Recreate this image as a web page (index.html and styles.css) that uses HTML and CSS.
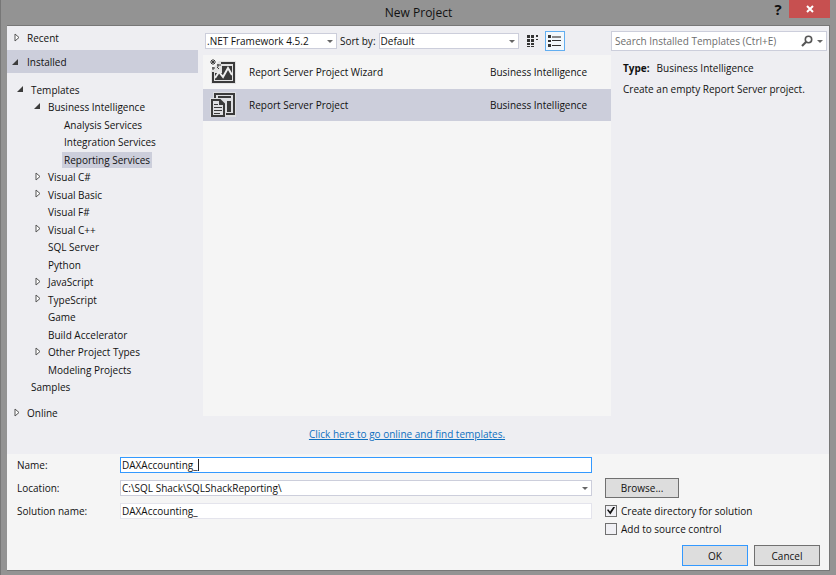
FILE: index.html
```html
<!DOCTYPE html>
<html lang="en">
<head>
<meta charset="utf-8">
<title>New Project</title>
<link rel="stylesheet" href="styles.css">
</head>
<body>
<svg class="defs" aria-hidden="true">
  <symbol id="closed" viewBox="0 0 6 9"><path d="M1 1v7l4-3.5z" fill="#fff" stroke="#555"/></symbol>
  <symbol id="open" viewBox="0 0 6 6"><path d="M6 0v6H0z" fill="#3c3c3c"/></symbol>
</svg>
<header class="titlebar">
  <h1>New Project</h1>
  <div class="window-buttons">
    <button class="help" type="button" aria-label="Help">?</button>
    <button class="close" type="button" aria-label="Close"><svg width="8" height="8" viewBox="0 0 8 8"><path d="M1 1l6 6M7 1L1 7" stroke="#fff" stroke-width="2"/></svg></button>
  </div>
</header>
<form class="dialog">
  <div class="upper">
    <nav class="sidebar">
      <div class="group"><svg class="closed"><use href="#closed"/></svg>Recent</div>
      <div class="group current"><svg class="open"><use href="#open"/></svg>Installed</div>
      <ul class="tree">
        <li class="l1"><svg class="open"><use href="#open"/></svg><span>Templates</span></li>
        <li class="l2"><svg class="open"><use href="#open"/></svg><span>Business Intelligence</span></li>
        <li class="l3"><span>Analysis Services</span></li>
        <li class="l3"><span>Integration Services</span></li>
        <li class="l3"><span class="picked">Reporting Services</span></li>
        <li class="l2"><svg class="closed"><use href="#closed"/></svg><span>Visual C#</span></li>
        <li class="l2"><svg class="closed"><use href="#closed"/></svg><span>Visual Basic</span></li>
        <li class="l2"><span>Visual F#</span></li>
        <li class="l2"><svg class="closed"><use href="#closed"/></svg><span>Visual C++</span></li>
        <li class="l2"><span>SQL Server</span></li>
        <li class="l2"><span>Python</span></li>
        <li class="l2"><svg class="closed"><use href="#closed"/></svg><span>JavaScript</span></li>
        <li class="l2"><svg class="closed"><use href="#closed"/></svg><span>TypeScript</span></li>
        <li class="l2"><span>Game</span></li>
        <li class="l2"><span>Build Accelerator</span></li>
        <li class="l2"><svg class="closed"><use href="#closed"/></svg><span>Other Project Types</span></li>
        <li class="l2"><span>Modeling Projects</span></li>
        <li class="l1"><span>Samples</span></li>
      </ul>
      <div class="group"><svg class="closed"><use href="#closed"/></svg>Online</div>
    </nav>
    <main class="center">
      <div class="toolbar">
        <span class="combo framework"><select aria-label="Framework"><option>.NET Framework 4.5.2</option></select></span>
        <label for="sort">Sort by:</label>
        <span class="combo sort"><select id="sort"><option>Default</option></select></span>
        <button class="view" type="button" aria-label="Small icons">
          <svg width="12" height="14" viewBox="0 0 12 14" fill="#333"><path d="M0 1h3v3H0zM4 1h3v3H4zM0 5h3v3H0zM4 5h3v3H4zM0 9h3v2H0zM4 9h3v2H4zM0 12h3v1H0zM4 12h3v1H4zM9 1h2v2H9zM9 5h2v1H9z"/></svg>
        </button>
        <button class="view active" type="button" aria-label="Medium icons">
          <svg width="14" height="14" viewBox="0 0 14 14" fill="#333"><path d="M0 1h3v3H0zM0 6h3v2H0zM0 10h3v3H0zM4 6h9v1H4zM4 11h9v1H4z"/><path d="M4 2h9v2H4z" fill="#888"/></svg>
        </button>
      </div>
      <ul class="templates">
        <li>
          <svg width="26" height="26" viewBox="0 0 26 26">
            <path d="M9 2h17v23H1V12z" fill="#e2e2e2"/>
            <path d="M11 4h13v19H3V13" fill="none" stroke="#3a3a3a" stroke-width="2"/>
            <path d="M12 7h10v14H5v-7h7z" fill="#3a3a3a"/>
            <path d="M5 19l4-6 4 5 5-9 4 7" fill="none" stroke="#eee" stroke-width="2"/>
            <path d="M3 0v6M0 3h6M1 1l4 4M5 1L1 5M8 5v3M7 6h4M3 8v3M2 9h3M7 8l2 2" stroke="#3a3a3a"/>
          </svg>
          <span class="name">Report Server Project Wizard</span><span class="type">Business Intelligence</span>
        </li>
        <li class="selected">
          <svg width="26" height="26" viewBox="0 0 26 26">
            <path d="M3 0h23v25H0V6h3z" fill="#dedfe2"/>
            <path d="M5 6V2h19v20h-8" fill="none" stroke="#3a3a3a" stroke-width="2"/>
            <path d="M8 4h13v2H8zM17 9h4v11h-4z" fill="#3a3a3a"/>
            <path d="M2 8h8l4 4v12H2z" fill="#dedfe2" stroke="#3a3a3a" stroke-width="2"/>
            <path d="M9 7v6h6z" fill="#3a3a3a"/>
            <path d="M4 12.500h4M4 15.500h8M4 18.500h8M4 21.500h6" stroke="#3a3a3a"/>
          </svg>
          <span class="name">Report Server Project</span><span class="type">Business Intelligence</span>
        </li>
      </ul>
      <p class="online"><a href="#">Click here to go online and find templates.</a></p>
    </main>
    <aside class="details">
      <div class="search">
        <input type="search" placeholder="Search Installed Templates (Ctrl+E)" aria-label="Search Installed Templates">
        <svg width="12" height="12" viewBox="0 0 12 12" fill="none" stroke="#555"><circle cx="7.500" cy="4.500" r="3.200" stroke-width="1.600"/><path d="M5 7L1 11" stroke-width="2.200"/></svg>
        <i class="arrow"></i>
      </div>
      <p><b>Type:</b>Business Intelligence</p>
      <p>Create an empty Report Server project.</p>
    </aside>
  </div>
  <div class="lower">
    <label for="name">Name:</label>
    <span class="field"><input id="name" class="focused" type="text" value="DAXAccounting_"><i class="caret"></i></span>
    <span></span>
    <label for="location">Location:</label>
    <span class="combo"><select id="location"><option>C:\SQL Shack\SQLShackReporting\</option></select></span>
    <button class="push browse" type="button">Browse...</button>
    <label for="solution">Solution name:</label>
    <span class="field"><input id="solution" type="text" value="DAXAccounting_"></span>
    <label class="check"><input type="checkbox" checked>Create directory for solution</label>
    <label class="check source"><input type="checkbox">Add to source control</label>
    <div class="actions">
      <button class="push default" type="submit">OK</button>
      <button class="push" type="button">Cancel</button>
    </div>
  </div>
</form>
</body>
</html>
```
FILE: styles.css
```css
* { box-sizing: border-box; }
body {
  margin: 0;
  min-height: 100vh;
  padding: 0 6px 4px;
  display: flex;
  flex-direction: column;
  background: #939393;
  border-left: 1px solid #777;
  color: #111;
  font: 10px/16px "Open Sans", "Noto Sans", sans-serif;
}
.defs { position: absolute; width: 0; height: 0; }
ul, p, h1 { margin: 0; padding: 0; list-style: none; }
button, input, select { font: inherit; color: inherit; margin: 0; }
button { padding: 0; border: 0; background: none; }

.titlebar {
  display: grid;
  grid-template-columns: 1fr auto 1fr;
  height: 25px;
}
h1 { grid-column: 2; font-size: 12px; font-weight: 400; line-height: 26px; }
.window-buttons { display: flex; justify-content: flex-end; align-items: flex-start; }
.help { width: 22px; font: bold 15px/19px "Open Sans", sans-serif; }
.close { display: grid; place-items: center; width: 41px; height: 18px; background: #c75050; }

.dialog {
  flex: 1;
  display: flex;
  flex-direction: column;
  background: #f5f5f5;
  border: 1px solid #777;
  border-width: 1px 1px 1px 0;
}
.upper {
  flex: 1;
  display: grid;
  grid-template-columns: 196px 1fr 218px;
  background: #eeeef2;
}

.sidebar { display: flex; flex-direction: column; padding-bottom: 30px; }
.group { display: flex; align-items: center; height: 23px; margin-right: 5px; padding-left: 7px; }
.group:first-child { margin-bottom: 1px; }
.group svg { margin-right: 7px; }
.current { background: #cccedb; padding-left: 5px; }
.current svg { margin-right: 9px; }
.closed { flex: none; width: 6px; height: 9px; }
.open { flex: none; width: 6px; height: 6px; }
.tree { flex: 1; display: flex; flex-direction: column; padding: 8px 0 5px; }
.tree li { flex: 1; display: flex; align-items: center; }
.tree svg { margin: 0 6px 2px -12px; }
.tree .closed { margin: 0 5px 2px -11px; }
.l1 { padding-left: 22px; }
.l2 { padding-left: 39px; }
.l3 { padding-left: 55px; }
.tree span { padding: 0 2px; }
.picked { background: #cccedb; }

.center { display: flex; flex-direction: column; }
.toolbar { display: flex; align-items: center; height: 29px; padding-left: 2px; }
.toolbar label { margin: 0 3px; }
.combo { position: relative; display: flex; }
.combo::after, .arrow {
  border: 3px solid transparent;
  border-top-color: #666;
  border-bottom: 0;
}
.combo::after {
  content: "";
  position: absolute;
  right: 4px;
  top: 50%;
  margin-top: -1px;
  pointer-events: none;
}
select, .field input {
  appearance: none;
  width: 100%;
  height: 16px;
  padding: 0 1px;
  border: 1px solid #cccedb;
  border-radius: 0;
  outline: 0;
  background: #fff;
  line-height: 14px;
}
.framework { width: 132px; }
.sort { width: 140px; margin-right: 5px; }
.view { display: grid; place-items: center; width: 18px; height: 20px; margin-right: 3px; }
.active { width: 20px; border: 1px solid #62aef0; background: #f3f8fc; }
.templates { flex: 1; background: #f5f5f5; }
.templates li { display: flex; align-items: center; height: 34px; padding-left: 7px; }
.templates .selected { height: 32px; background: #cccedb; }
.name { flex: 1; margin-left: 13px; }
.type { width: 121px; }
.online { height: 38px; line-height: 36px; text-align: center; }
.online a { color: #0e70c0; }

.search {
  display: flex;
  align-items: center;
  height: 20px;
  margin: 5px 2px 9px 0;
  padding: 0 3px;
  border: 1px solid #cccedb;
  background: #fff;
}
.search input { flex: 1; min-width: 0; padding: 0; border: 0; background: none; }
.search input::placeholder { color: #6d6d6d; opacity: 1; }
.arrow { margin-left: 4px; }
.details p { padding-left: 12px; margin-bottom: 5px; }
.details b { margin-right: 7px; }

.lower {
  display: grid;
  grid-template-columns: 93px 1fr 215px;
  column-gap: 10px;
  grid-template-rows: 22px 24px 21px 16px auto;
  align-items: center;
  padding: 0 9px 4px 10px;
}
.lower > .combo, .field { margin-right: 3px; }
.field { position: relative; display: flex; }
.field input { border-color: #e4e4ec; }
.field .focused { border-color: #3399ff; }
.caret { position: absolute; left: 78px; top: 2px; width: 1px; height: 12px; background: #222; }
.push { width: 66px; height: 21px; border: 1px solid #707070; background: #ddd; }
.browse { width: 74px; height: 20px; }
.default { border-color: #3399ff; }
.check { display: flex; align-items: center; gap: 4px; }
.check input {
  appearance: none;
  display: grid;
  place-items: center;
  width: 12px;
  height: 12px;
  border: 1px solid #707070;
  background: #f0f0f4;
}
.check input:checked::before {
  content: "";
  width: 8px;
  height: 8px;
  background: #111;
  clip-path: polygon(0 45%, 15% 35%, 38% 62%, 82% 0, 100% 10%, 42% 100%);
}
.source { grid-column: 3; }
.actions { grid-column: 1 / -1; display: flex; justify-content: flex-end; gap: 6px; padding-top: 8px; }
```
